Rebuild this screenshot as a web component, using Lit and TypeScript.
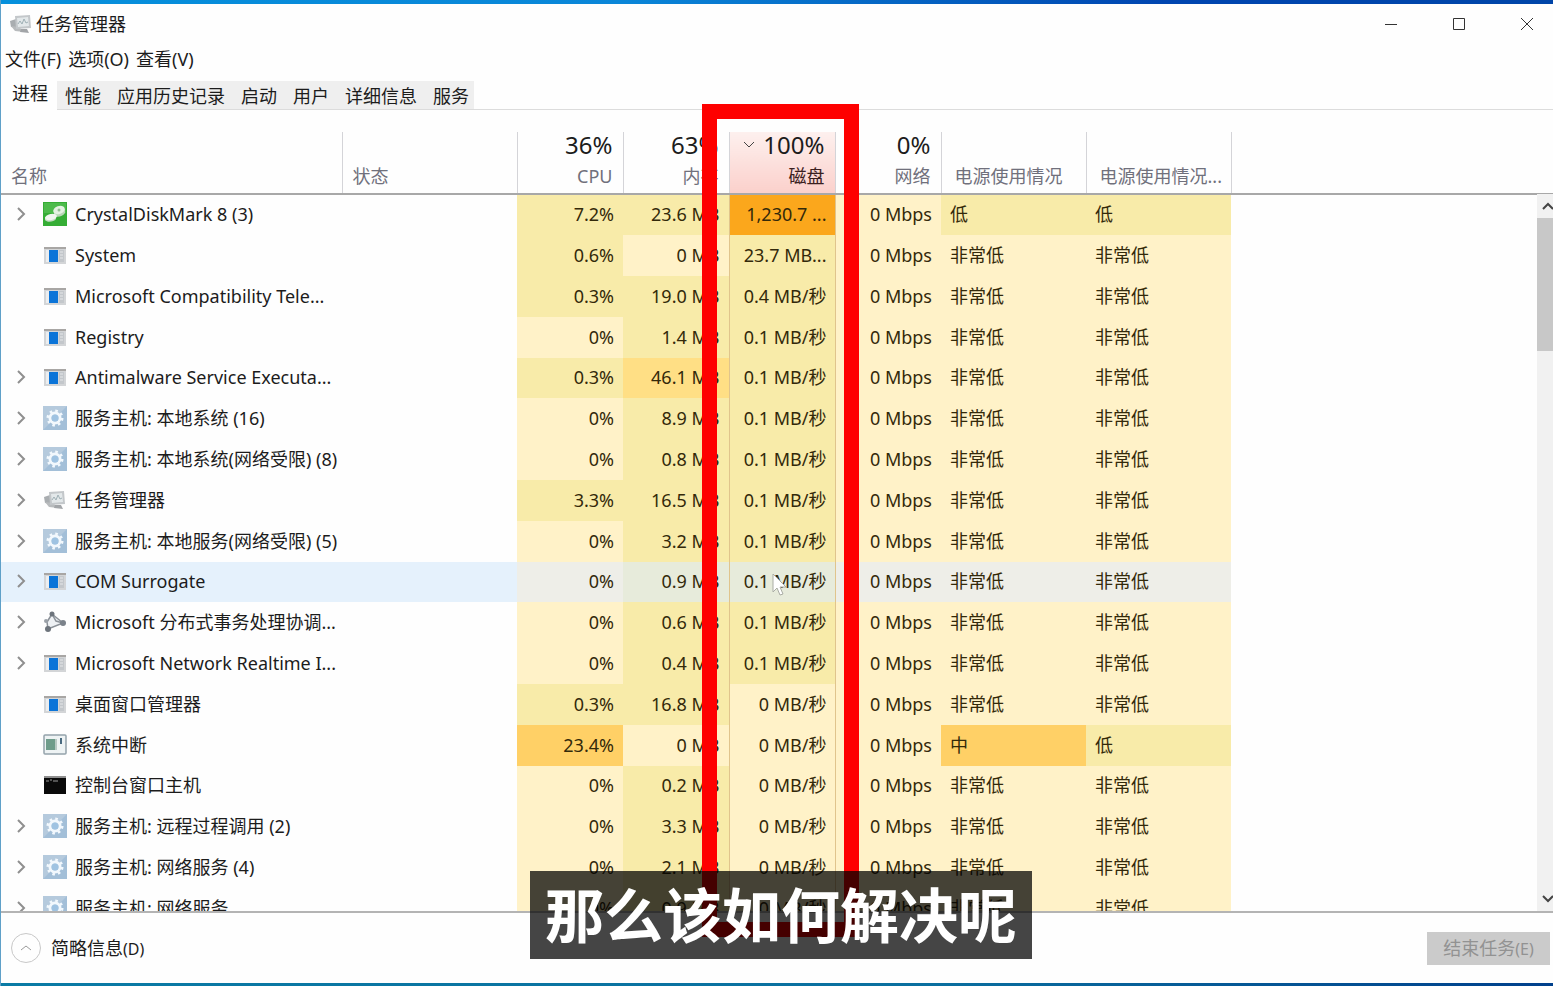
import { LitElement, html, css, svg, nothing } from "lit";
import { customElement, property } from "lit/decorators.js";
import { classMap } from "lit/directives/class-map.js";

type IconName = "disk" | "app" | "gear" | "task" | "nodes" | "chip" | "console";

interface Proc {
  name: string;
  icon: IconName;
  group: boolean;
  cpu: string;
  mem: string;
  disk: string;
  power: string;
  trend: string;
  heat: string;
  hover?: boolean;
}

// heat holds one digit per value column: cpu, memory, disk, network, power, trend
const p = (
  name: string, icon: IconName, group: boolean, cpu: string, mem: string,
  disk: string, heat: string, power = "非常低", trend = "非常低", hover = false,
): Proc => ({ name, icon, group, cpu, mem, disk, heat, power, trend, hover });

const PROCS: Proc[] = [
  p("CrystalDiskMark 8 (3)", "disk", true, "7.2%", "23.6 MB", "1,230.7 ...", "114011", "低", "低"),
  p("System", "app", false, "0.6%", "0 MB", "23.7 MB...", "101000"),
  p("Microsoft Compatibility Tele...", "app", false, "0.3%", "19.0 MB", "0.4 MB/秒", "111000"),
  p("Registry", "app", false, "0%", "1.4 MB", "0.1 MB/秒", "011000"),
  p("Antimalware Service Executa...", "app", true, "0.3%", "46.1 MB", "0.1 MB/秒", "121000"),
  p("服务主机: 本地系统 (16)", "gear", true, "0%", "8.9 MB", "0.1 MB/秒", "011000"),
  p("服务主机: 本地系统(网络受限) (8)", "gear", true, "0%", "0.8 MB", "0.1 MB/秒", "011000"),
  p("任务管理器", "task", true, "3.3%", "16.5 MB", "0.1 MB/秒", "111000"),
  p("服务主机: 本地服务(网络受限) (5)", "gear", true, "0%", "3.2 MB", "0.1 MB/秒", "011000"),
  p("COM Surrogate", "app", true, "0%", "0.9 MB", "0.1 MB/秒", "011000", "非常低", "非常低", true),
  p("Microsoft 分布式事务处理协调...", "nodes", true, "0%", "0.6 MB", "0.1 MB/秒", "011000"),
  p("Microsoft Network Realtime I...", "app", true, "0%", "0.4 MB", "0.1 MB/秒", "011000"),
  p("桌面窗口管理器", "app", false, "0.3%", "16.8 MB", "0 MB/秒", "110000"),
  p("系统中断", "chip", false, "23.4%", "0 MB", "0 MB/秒", "300031", "中", "低"),
  p("控制台窗口主机", "console", false, "0%", "0.2 MB", "0 MB/秒", "010000"),
  p("服务主机: 远程过程调用 (2)", "gear", true, "0%", "3.3 MB", "0 MB/秒", "010000"),
  p("服务主机: 网络服务 (4)", "gear", true, "0%", "2.1 MB", "0 MB/秒", "010000"),
  p("服务主机: 网络服务", "gear", true, "0%", "0.9 MB", "0 MB/秒", "010000"),
];

const taskShape = svg`
  <path d="M1 9l6-2v9l-5-1z" fill="#a9adb0"/>
  <path d="M2 14l8 1 5 5-9-1z" fill="#b8bbbd"/>
  <path d="M6 4l15-1 1 13-15 1z" fill="#c3c7ca"/>
  <path d="M8 6l11-1 1 9-11 1z" fill="#e3e8ea"/>
  <path d="M9 12l2-3 2 3 2-5 2 4 2-1" fill="none" stroke="#9fb0b5"/>
  <path d="M12 17h6l2 4-9-1z" fill="#a2a5a8"/>`;

const SHAPES: Record<IconName, unknown> = {
  disk: svg`
    <rect width="24" height="24" fill="#35ad35"/>
    <rect x="1" y="1" width="22" height="10" fill="#4dbb4b"/>
    <path d="M11 9v4c1 3 9 2 11-2V7z" fill="#b9d6b7"/>
    <ellipse cx="16" cy="8" rx="6" ry="4" fill="#e4f1e2" transform="rotate(-20 16 8)"/>
    <path d="M2 15v3c2 3 9 2 11-1v-3z" fill="#c2dac1"/>
    <ellipse cx="8" cy="15" rx="6" ry="3" fill="#f0f6ef" transform="rotate(-12 8 15)"/>
    <circle cx="16" cy="8" r="1.500" fill="#95bf93"/>`,
  app: svg`
    <rect x="1" y="4" width="22" height="17" fill="#d3d5d7"/>
    <rect x="1" y="4" width="22" height="2" fill="#a8a6a4"/>
    <rect x="3" y="7" width="3" height="12" fill="#eceef0"/>
    <rect x="6" y="7" width="9" height="12" fill="#0b74d8"/>
    <rect x="16" y="7" width="5" height="12" fill="#c3c7cb"/>
    <path d="M17 9h3M17 12h3M17 15h3" stroke="#e5e7e9"/>`,
  gear: svg`
    <rect width="24" height="24" fill="#a3bfd8"/>
    <path d="M0 0h24L0 24z" fill="#b5cadd"/>
    <circle cx="12" cy="12" r="7" fill="none" stroke="#f2f8fd" stroke-width="3" stroke-dasharray="2.500 3"/>
    <circle cx="12" cy="12" r="5" fill="none" stroke="#f2f8fd" stroke-width="3"/>
    <circle cx="12" cy="12" r="3.500" fill="#9fc3e2"/>`,
  task: taskShape,
  nodes: svg`
    <path d="M9 4L4 12l1 7 15-6z" fill="#eef1f4" stroke="#8b9198" stroke-width="1.500"/>
    <path d="M9 4l4 7 7 2" fill="none" stroke="#8b9198" stroke-width="1.500"/>
    <circle cx="9" cy="4" r="2.500" fill="#6d747c"/>
    <circle cx="3" cy="11" r="2" fill="#9ba1a8"/>
    <circle cx="5" cy="19" r="3" fill="#6d747c"/>
    <circle cx="20" cy="13" r="3" fill="#7b828a"/>`,
  chip: svg`
    <rect x="1" y="2" width="22" height="19" rx="1" fill="#eef3f4" stroke="#94a3ab" stroke-width="1.500"/>
    <rect x="3" y="6" width="9" height="11" fill="#6f9c8b"/>
    <path d="M13 6v11" stroke="#b9c9c4" stroke-width="2"/>
    <path d="M18 5v6" stroke="#4a6a80" stroke-width="2"/>`,
  console: svg`
    <rect x="1" y="3" width="22" height="18" fill="#0a0a0a"/>
    <rect x="1" y="3" width="22" height="2" fill="#8f8f8f"/>
    <path d="M3 8h3M7 7h2M10 8h5" stroke="#9a9a9a"/>`,
};

@customElement("tm-icon")
export class TmIcon extends LitElement {
  @property() name: IconName = "app";
  static styles = css`
    :host { display: block; flex: none; width: 24px; height: 24px; }
    svg { display: block; width: 100%; height: 100%; }
  `;
  render() {
    return html`<svg viewBox="0 0 24 24" aria-hidden="true">${SHAPES[this.name]}</svg>`;
  }
}

@customElement("app-root")
export class AppRoot extends LitElement {
  static styles = css`
    :host {
      display: block;
      height: 100vh;
      font: 18px/24px "Noto Sans", "Noto Sans CJK SC", sans-serif;
      color: #1c1c1c;
    }
    * { box-sizing: border-box; }
    button { font: inherit; color: inherit; border: 0; padding: 0; background: none; }
    .window {
      position: relative;
      display: flex;
      flex-direction: column;
      height: 100%;
      overflow: hidden;
      background: linear-gradient(90deg, #0590dc, #0a86d8 40%, #0045b0 75%, #0045a8) top / 100% 4px no-repeat,
        linear-gradient(90deg, #0a7ba5, #0a6f9f 60%, #00408c) bottom / 100% 3px no-repeat,
        #fefefe;
      border-left: 1px solid #5fa0c8;
      padding: 4px 0 3px;
    }
    .titlebar { display: flex; align-items: center; height: 40px; padding-left: 8px; }
    .title { margin: 0 auto 0 3px; font-size: inherit; font-weight: 400; }
    .caption-buttons { display: flex; gap: 16px; }
    .caption-button { display: grid; place-items: center; width: 52px; height: 40px; }
    .caption-button svg { width: 12px; height: 12px; fill: none; stroke: #333; }
    .menu { display: flex; gap: 7px; height: 32px; align-items: center; padding: 0 0 2px 4px; }
    .tabs { display: flex; height: 34px; border-bottom: 1px solid #dcdcdc; }
    .tab { height: 28px; margin-top: 5px; padding: 2px 8px 0; background: #efefef; }
    .tab.active { height: 34px; margin-top: 0; padding: 0 9px 0 11px; background: #fefefe; }
    .tab:last-child { padding-right: 5px; }
    .list { flex: 1; min-height: 0; display: grid; padding-top: 22px; overflow: hidden; }
    .scroller { grid-area: 1 / 1; min-height: 0; overflow: hidden; }
    table { width: 100%; table-layout: fixed; border-collapse: collapse; }
    .c-name { width: 341px; }
    .c-status { width: 175px; }
    .c-value { width: 106px; }
    .c-power { width: 145px; }
    th {
      height: 62px;
      padding: 0 10px 5px;
      border-right: 1px solid #d4d4d8;
      border-bottom: 2px solid #a8a8a8;
      vertical-align: bottom;
      text-align: left;
      font-weight: 400;
      color: #70707c;
      white-space: nowrap;
    }
    th.rest { border-right: 0; }
    th.num { text-align: right; }
    th.power { padding: 0 0 5px 13px; }
    .total {
      display: flex;
      justify-content: flex-end;
      align-items: center;
      gap: 8px;
      margin-bottom: 7px;
      font-size: 24px;
      line-height: 24px;
      color: #1c1c1c;
    }
    .total svg { width: 12px; height: 8px; fill: none; stroke: #444; }
    th.sorted { background: linear-gradient(#fdf0ee, #fbd0cb); color: #3a2020; }
    td { height: 41px; padding: 0 9px 2px; white-space: nowrap; overflow: hidden; }
    tr:nth-child(5n) td { height: 40px; }
    td.num { text-align: right; color: #33290a; }
    td.power { color: #33290a; }
    td.disk { padding-right: 8px; border-left: 1px solid #e0c48c; border-right: 1px solid #e0c48c; }
    .h0 { background: #fff2c8; }
    .h1 { background: #f8eba9; }
    .h2 { background: #ffdf85; }
    .h3 { background: #ffd066; }
    .h4 { background: #fba71c; }
    .hover td { background: #e5f1fc; }
    .hover .h0 { background: #eeeee8; }
    .hover .h1 { background: #e7ebdb; }
    .process { display: flex; align-items: center; gap: 8px; padding-left: 5px; }
    .expand { flex: none; width: 12px; height: 24px; display: grid; place-items: center; margin-right: 8px; }
    .expand svg { width: 9px; height: 14px; fill: none; stroke: #8f8f8f; stroke-width: 2; }
    td:first-child { padding-right: 0; }
    .scrollbar {
      grid-area: 1 / 1;
      justify-self: end;
      width: 16px;
      margin-top: 62px;
      display: flex;
      flex-direction: column;
      overflow: hidden;
      background: #f1f1f1;
    }
    .arrow { height: 24px; display: grid; align-items: center; justify-items: end; }
    .arrow svg { width: 11px; height: 8px; fill: none; stroke: #444; stroke-width: 2; }
    .thumb { height: 133px; background: #c8c8c8; }
    .arrow.down { margin-top: auto; }
    .footer {
      display: flex;
      align-items: center;
      justify-content: space-between;
      height: 72px;
      padding: 0 3px 0 10px;
      border-top: 2px solid #b4b4b4;
    }
    .details { display: flex; align-items: center; gap: 10px; }
    .circle { display: grid; place-items: center; width: 30px; height: 30px; border: 1px solid #c8c8c8; border-radius: 50%; }
    .circle svg { width: 10px; height: 6px; fill: none; stroke: #999; }
    .key { font-size: 16px; }
    .end { width: 123px; height: 33px; background: #cbcbcb; color: #929292; }
    .frame { position: absolute; left: 701px; top: 104px; width: 157px; bottom: 49px; border: 15px solid #fe0000; }
    .subtitle {
      position: absolute;
      left: 529px;
      bottom: 27px;
      height: 88px;
      margin: 0;
      padding: 0 15px;
      background: rgba(0, 0, 0, 0.73);
      color: #fff;
      font: 700 59px/84px "Noto Sans CJK SC", sans-serif;
      white-space: nowrap;
    }
    .cursor { position: absolute; left: 771px; top: 573px; width: 17px; height: 24px; }
  `;

  private row(r: Proc) {
    const h = (i: number) => `h${r.heat[i]}`;
    return html`<tr class=${classMap({ hover: !!r.hover })}>
      <td>
        <div class="process">
          ${r.group
            ? html`<button class="expand" aria-label="展开"><svg viewBox="0 0 9 14"><path d="M1 1l6 6-6 6"/></svg></button>`
            : html`<span class="expand"></span>`}
          <tm-icon name=${r.icon}></tm-icon>
          <span>${r.name}</span>
        </div>
      </td>
      <td></td>
      <td class="num ${h(0)}">${r.cpu}</td>
      <td class="num ${h(1)}">${r.mem}</td>
      <td class="num disk ${h(2)}">${r.disk}</td>
      <td class="num ${h(3)}">0 Mbps</td>
      <td class="power ${h(4)}">${r.power}</td>
      <td class="power ${h(5)}">${r.trend}</td>
    </tr>`;
  }

  private head(label: string, total: string, sorted = false) {
    return html`<th class="num ${sorted ? "sorted" : ""}">
      <div class="total">
        ${sorted ? html`<svg viewBox="0 0 12 8"><path d="M1 1l5 5 5-5"/></svg>` : nothing}${total}
      </div>
      ${label}
    </th>`;
  }

  render() {
    return html`
      <main class="window">
        <header class="titlebar">
          <tm-icon name="task"></tm-icon>
          <h1 class="title">任务管理器</h1>
          <div class="caption-buttons">
            <button class="caption-button" aria-label="最小化"><svg viewBox="0 0 12 12"><path d="M0 6.500h12"/></svg></button>
            <button class="caption-button" aria-label="最大化"><svg viewBox="0 0 12 12"><path d="M.5.5h11v11H.5z"/></svg></button>
            <button class="caption-button" aria-label="关闭"><svg viewBox="0 0 12 12"><path d="M0 0l12 12M12 0L0 12"/></svg></button>
          </div>
        </header>
        <nav class="menu">
          <button>文件(F)</button><button>选项(O)</button><button>查看(V)</button>
        </nav>
        <nav class="tabs">
          ${["进程", "性能", "应用历史记录", "启动", "用户", "详细信息", "服务"].map(
            (t, i) => html`<button class=${classMap({ tab: true, active: i === 0 })}>${t}</button>`,
          )}
        </nav>
        <section class="list">
          <div class="scroller">
            <table>
              <colgroup>
                <col class="c-name"><col class="c-status">
                <col class="c-value"><col class="c-value"><col class="c-value"><col class="c-value">
                <col class="c-power"><col class="c-power"><col>
              </colgroup>
              <thead>
                <tr>
                  <th>名称</th>
                  <th>状态</th>
                  ${this.head("CPU", "36%")}
                  ${this.head("内存", "63%")}
                  ${this.head("磁盘", "100%", true)}
                  ${this.head("网络", "0%")}
                  <th class="power">电源使用情况</th>
                  <th class="power">电源使用情况...</th>
                  <th class="rest"></th>
                </tr>
              </thead>
              <tbody>${PROCS.map((r) => this.row(r))}</tbody>
            </table>
          </div>
          <div class="scrollbar">
            <div class="arrow"><svg viewBox="0 0 11 8"><path d="M1 7l5-5 5 5"/></svg></div>
            <div class="thumb"></div>
            <div class="arrow down"><svg viewBox="0 0 11 8"><path d="M1 1l5 5 5-5"/></svg></div>
          </div>
        </section>
        <footer class="footer">
          <button class="details">
            <span class="circle"><svg viewBox="0 0 10 6"><path d="M0 5l5-4 5 4"/></svg></span>
            <span>简略信息<span class="key">(D)</span></span>
          </button>
          <button class="end" disabled>结束任务<span class="key">(E)</span></button>
        </footer>
        <svg class="cursor" viewBox="0 0 17 24" aria-hidden="true">
          <path d="M1 1v18l4-4 3 7 3-1-3-7h6z" fill="#fff" stroke="#a9aca4"/>
        </svg>
        <div class="frame"></div>
        <p class="subtitle">那么该如何解决呢</p>
      </main>
    `;
  }
}
